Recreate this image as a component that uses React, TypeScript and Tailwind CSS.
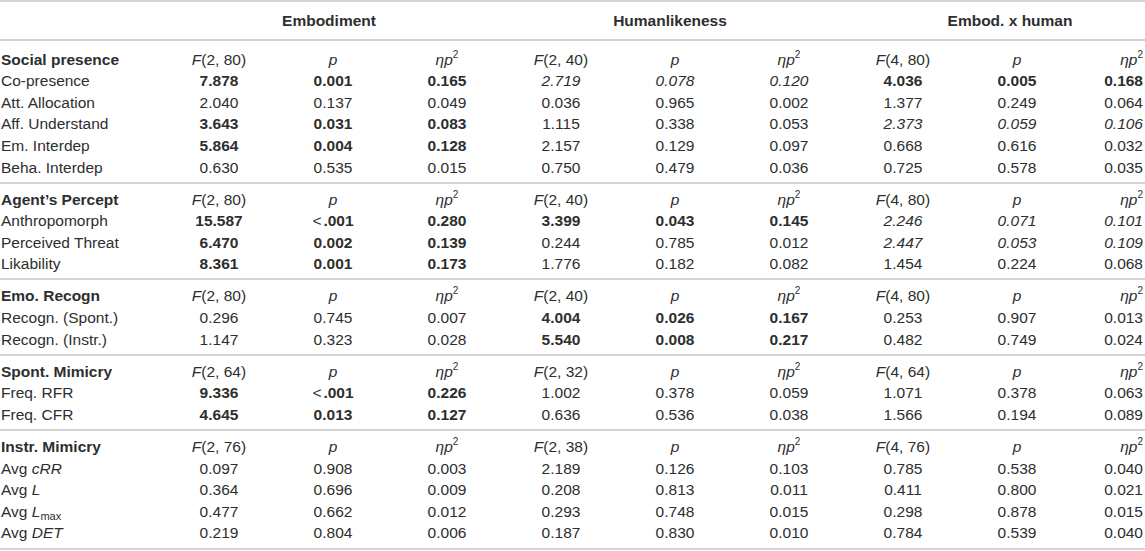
import React from 'react';

type Row = { label: React.ReactNode; values: string[]; styles: string };
type Section = { title: string; dfs: [string, string, string]; rows: Row[] };

const grid = 'grid grid-cols-[162px_repeat(8,114px)_71px]';

const sections: Section[] = [
  {
    title: 'Social presence',
    dfs: ['(2, 80)', '(2, 40)', '(4, 80)'],
    rows: [
      { label: 'Co-presence', values: ['7.878', '0.001', '0.165', '2.719', '0.078', '0.120', '4.036', '0.005', '0.168'], styles: 'bbbiiibbb' },
      { label: 'Att. Allocation', values: ['2.040', '0.137', '0.049', '0.036', '0.965', '0.002', '1.377', '0.249', '0.064'], styles: 'nnnnnnnnn' },
      { label: 'Aff. Understand', values: ['3.643', '0.031', '0.083', '1.115', '0.338', '0.053', '2.373', '0.059', '0.106'], styles: 'bbbnnniii' },
      { label: 'Em. Interdep', values: ['5.864', '0.004', '0.128', '2.157', '0.129', '0.097', '0.668', '0.616', '0.032'], styles: 'bbbnnnnnn' },
      { label: 'Beha. Interdep', values: ['0.630', '0.535', '0.015', '0.750', '0.479', '0.036', '0.725', '0.578', '0.035'], styles: 'nnnnnnnnn' },
    ],
  },
  {
    title: 'Agent’s Percept',
    dfs: ['(2, 80)', '(2, 40)', '(4, 80)'],
    rows: [
      { label: 'Anthropomorph', values: ['15.587', '<.001', '0.280', '3.399', '0.043', '0.145', '2.246', '0.071', '0.101'], styles: 'bbbbbbiii' },
      { label: 'Perceived Threat', values: ['6.470', '0.002', '0.139', '0.244', '0.785', '0.012', '2.447', '0.053', '0.109'], styles: 'bbbnnniii' },
      { label: 'Likability', values: ['8.361', '0.001', '0.173', '1.776', '0.182', '0.082', '1.454', '0.224', '0.068'], styles: 'bbbnnnnnn' },
    ],
  },
  {
    title: 'Emo. Recogn',
    dfs: ['(2, 80)', '(2, 40)', '(4, 80)'],
    rows: [
      { label: 'Recogn. (Spont.)', values: ['0.296', '0.745', '0.007', '4.004', '0.026', '0.167', '0.253', '0.907', '0.013'], styles: 'nnnbbbnnn' },
      { label: 'Recogn. (Instr.)', values: ['1.147', '0.323', '0.028', '5.540', '0.008', '0.217', '0.482', '0.749', '0.024'], styles: 'nnnbbbnnn' },
    ],
  },
  {
    title: 'Spont. Mimicry',
    dfs: ['(2, 64)', '(2, 32)', '(4, 64)'],
    rows: [
      { label: 'Freq. RFR', values: ['9.336', '<.001', '0.226', '1.002', '0.378', '0.059', '1.071', '0.378', '0.063'], styles: 'bbbnnnnnn' },
      { label: 'Freq. CFR', values: ['4.645', '0.013', '0.127', '0.636', '0.536', '0.038', '1.566', '0.194', '0.089'], styles: 'bbbnnnnnn' },
    ],
  },
  {
    title: 'Instr. Mimicry',
    dfs: ['(2, 76)', '(2, 38)', '(4, 76)'],
    rows: [
      { label: <>Avg <i>cRR</i></>, values: ['0.097', '0.908', '0.003', '2.189', '0.126', '0.103', '0.785', '0.538', '0.040'], styles: 'nnnnnnnnn' },
      { label: <>Avg <i>L</i></>, values: ['0.364', '0.696', '0.009', '0.208', '0.813', '0.011', '0.411', '0.800', '0.021'], styles: 'nnnnnnnnn' },
      { label: <>Avg <i>L</i><sub className="text-[11px] -bottom-[3px]">max</sub></>, values: ['0.477', '0.662', '0.012', '0.293', '0.748', '0.015', '0.298', '0.878', '0.015'], styles: 'nnnnnnnnn' },
      { label: <>Avg <i>DET</i></>, values: ['0.219', '0.804', '0.006', '0.187', '0.830', '0.010', '0.784', '0.539', '0.040'], styles: 'nnnnnnnnn' },
    ],
  },
];

// last column sits against the right edge, so it is right aligned
const align = (i: number) => (i === 8 ? 'text-right pr-[2px]' : 'text-center');

const Eta = () => (
  <span>
    <i>ηp</i>
    <sup className="text-[10px] -top-[7px]">2</sup>
  </span>
);

const Cell = ({ value, style, i }: { value: string; style: string; i: number }) => {
  if (value.startsWith('<')) {
    return (
      <span className={align(i)}>
        &lt;<span className="ml-[2px] font-bold">{value.slice(1)}</span>
      </span>
    );
  }
  const cls = style === 'b' ? 'font-bold' : style === 'i' ? 'italic' : '';
  return <span className={`${align(i)} ${cls}`}>{value}</span>;
};

export default function App() {
  return (
    <div className="w-[1145px] h-[551px] overflow-hidden bg-white font-['Liberation_Sans',Arial,sans-serif] text-[15.5px] leading-none text-[#2e2e2e]">
      <div className={`${grid} h-[38.5px] items-center border-t-2 border-[#d3d3d3] font-bold`}>
        <span />
        <span className="col-span-3 text-center pr-[8px]">Embodiment</span>
        <span className="col-span-3 text-center pr-[10px]">Humanlikeness</span>
        <span className="col-span-3 text-center pl-[29px]">Embod. x human</span>
      </div>

      {sections.map((s, si) => (
        <div
          key={s.title}
          className={`border-t-2 border-[#d3d3d3] ${si === 0 ? 'pt-[8px]' : 'pt-[5px]'} ${
            si === sections.length - 1 ? 'pb-[4px] border-b-2' : 'pb-[3.5px]'
          }`}
        >
          <div className={`${grid} h-[21.6px] items-center`}>
            <span className="pl-px font-bold">{s.title}</span>
            {s.dfs.map((df, di) => (
              <React.Fragment key={df + di}>
                <span className="text-center">
                  <i>F</i>
                  {df}
                </span>
                <span className="text-center">
                  <i>p</i>
                </span>
                <span className={align(di * 3 + 2)}>
                  <Eta />
                </span>
              </React.Fragment>
            ))}
          </div>
          {s.rows.map((r, ri) => (
            <div key={ri} className={`${grid} h-[21.6px] items-center`}>
              <span className="pl-px">{r.label}</span>
              {r.values.map((v, vi) => (
                <Cell key={vi} value={v} style={r.styles[vi]} i={vi} />
              ))}
            </div>
          ))}
        </div>
      ))}
    </div>
  );
}
